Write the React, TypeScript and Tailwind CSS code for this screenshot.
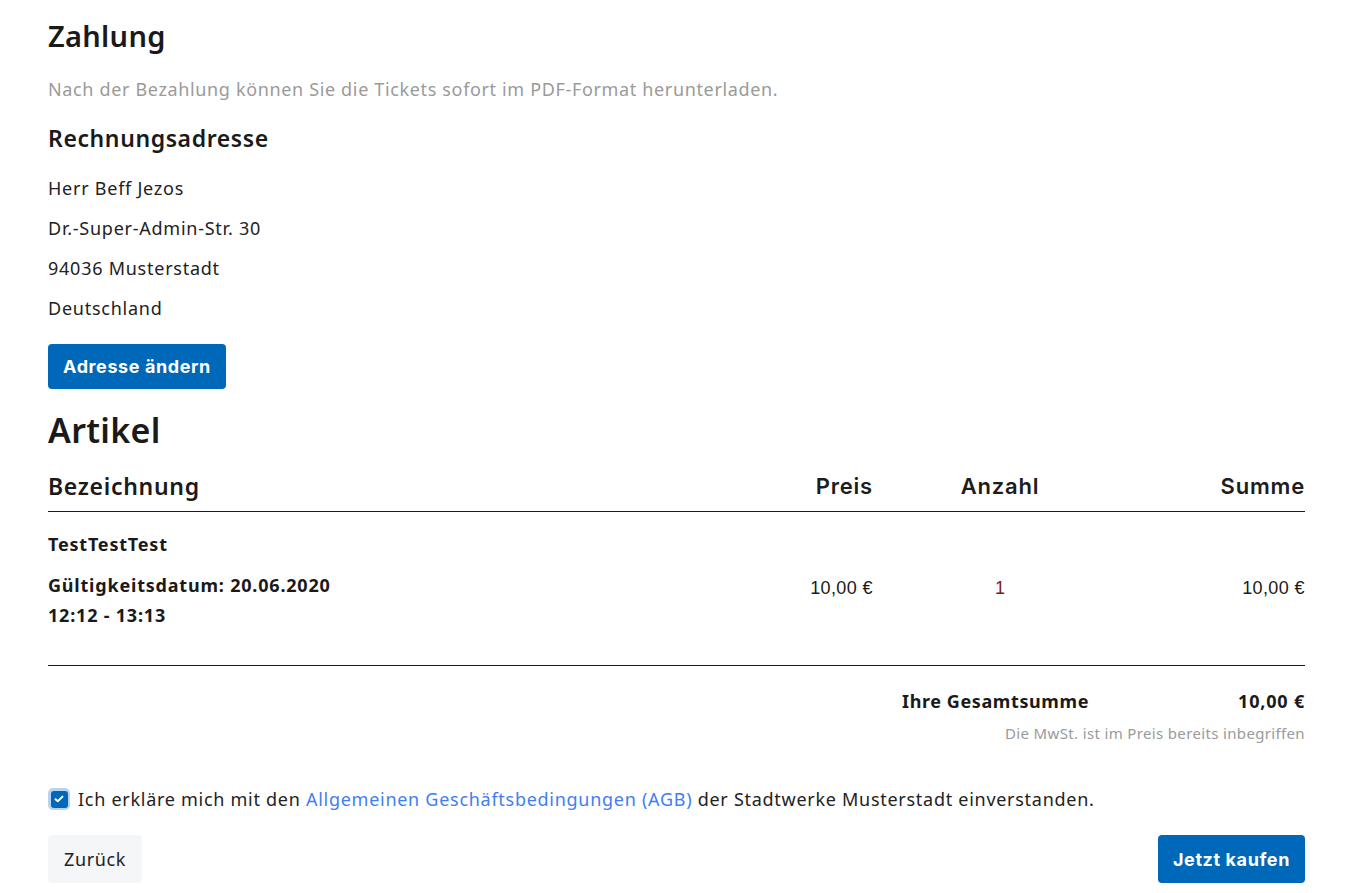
import React from "react";

const body = { fontFamily: '"Noto Sans", "Open Sans", sans-serif' };
const inter = { fontFamily: 'Inter, "Liberation Sans", sans-serif' };
const num = { fontFamily: '"Liberation Sans", Arial, sans-serif' };

export default function App() {
  return (
    <div className="min-h-[893px] w-full bg-white text-[#1d1d1f]" style={body}>
      <div className="ml-[48px] w-[1257px] pt-[16px]">
        <h1 className="text-[29px] font-semibold leading-[40px] tracking-[0.3px] text-[#1a1a1a]">Zahlung</h1>
        <p className="mt-[21px] text-[18px] leading-[24px] tracking-[0.65px] text-[#9a9a9a]">
          Nach der Bezahlung können Sie die Tickets sofort im PDF-Format herunterladen.
        </p>
        <h2 className="mt-[22px] text-[23px] font-semibold leading-[30px] tracking-[0.6px] text-[#1a1a1a]">Rechnungsadresse</h2>
        <div className="mt-[23px] flex flex-col gap-[16px] text-[18px] leading-[24px] tracking-[0.75px] text-[#222]">
          <p>Herr Beff Jezos</p>
          <p>Dr.-Super-Admin-Str. 30</p>
          <p>94036 Musterstadt</p>
          <p>Deutschland</p>
        </div>
        <button
          className="mt-[24px] flex h-[45px] items-center rounded-[4px] bg-[#0068b8] px-[15px] text-[18px] font-bold tracking-[0.6px] text-white"
          style={inter}
        >
          Adresse ändern
        </button>
        <h2 className="mt-[20px] text-[34px] font-semibold leading-[42px] tracking-[0.3px] text-[#1a1a1a]">Artikel</h2>

        <div className="mt-[20px] grid grid-cols-[1fr_150px_254px_178px] items-end border-b border-[#1a1a1a] pb-[10px]">
          <div className="text-[23px] font-semibold leading-[30px] tracking-[0.7px] text-[#1a1a1a]">Bezeichnung</div>
          <div className="text-right text-[22px] font-semibold leading-[30px] tracking-[0.8px]" style={inter}>Preis</div>
          <div className="text-center text-[22px] font-semibold leading-[30px] tracking-[0.8px]" style={inter}>Anzahl</div>
          <div className="text-right text-[22px] font-semibold leading-[30px] tracking-[0.8px]" style={inter}>Summe</div>
        </div>

        <div className="grid grid-cols-[1fr_150px_254px_178px] border-b border-[#1a1a1a] pb-[35px] pt-[20px]">
          <div className="text-[18px] font-bold tracking-[0.8px] text-[#1a1a1a]">
            <p className="leading-[24px]">TestTestTest</p>
            <p className="mt-[14px] leading-[30px]">Gültigkeitsdatum: 20.06.2020</p>
            <p className="leading-[30px]">12:12 - 13:13</p>
          </div>
          <div className="mt-[44px] self-start text-right text-[18px] leading-[24px] tracking-[0.4px] text-[#1a1a1a]" style={num}>10,00 €</div>
          <div className="mt-[44px] self-start text-center text-[18px] leading-[24px] text-[#7d1b1b]" style={num}>1</div>
          <div className="mt-[44px] self-start text-right text-[18px] leading-[24px] tracking-[0.4px] text-[#1a1a1a]" style={num}>10,00 €</div>
        </div>

        <div className="mt-[23px] flex justify-end text-[18px] font-bold leading-[24px] tracking-[0.6px] text-[#1a1a1a]">
          <span>Ihre Gesamtsumme</span>
          <span className="w-[216px] text-right tracking-[0.8px]">10,00 €</span>
        </div>
        <p className="mt-[10px] text-right text-[15px] leading-[20px] tracking-[0.35px] text-[#9a9a9a]">
          Die MwSt. ist im Preis bereits inbegriffen
        </p>

        <label className="mt-[44px] flex items-center gap-[8px] text-[18px] leading-[24px] tracking-[0.72px] text-[#222]">
          <span className="flex h-[22px] w-[22px] shrink-0 items-center justify-center rounded-[5px] bg-[#b7d3ee]">
            <span className="flex h-[17px] w-[17px] items-center justify-center rounded-[3px] bg-[#0068b8]">
              <svg width="10" height="8" viewBox="0 0 10 8" fill="none">
                <path d="M1.5 4.2L3.8 6.3L8.5 1.6" stroke="white" strokeWidth="2" strokeLinecap="round" strokeLinejoin="round" />
              </svg>
            </span>
          </span>
          <span>
            Ich erkläre mich mit den{" "}
            <a className="text-[#3f7ef3]">Allgemeinen Geschäftsbedingungen (AGB)</a>{" "}
            der Stadtwerke Musterstadt einverstanden.
          </span>
        </label>

        <div className="mt-[24px] flex items-center justify-between">
          <button className="flex h-[48px] items-center rounded-[4px] bg-[#f5f6f8] px-[16px] text-[18px] tracking-[0.65px] text-[#222]">
            Zurück
          </button>
          <button
            className="flex h-[48px] items-center rounded-[4px] bg-[#0068b8] px-[15px] text-[18px] font-bold tracking-[0.6px] text-white"
            style={inter}
          >
            Jetzt kaufen
          </button>
        </div>
      </div>
    </div>
  );
}
